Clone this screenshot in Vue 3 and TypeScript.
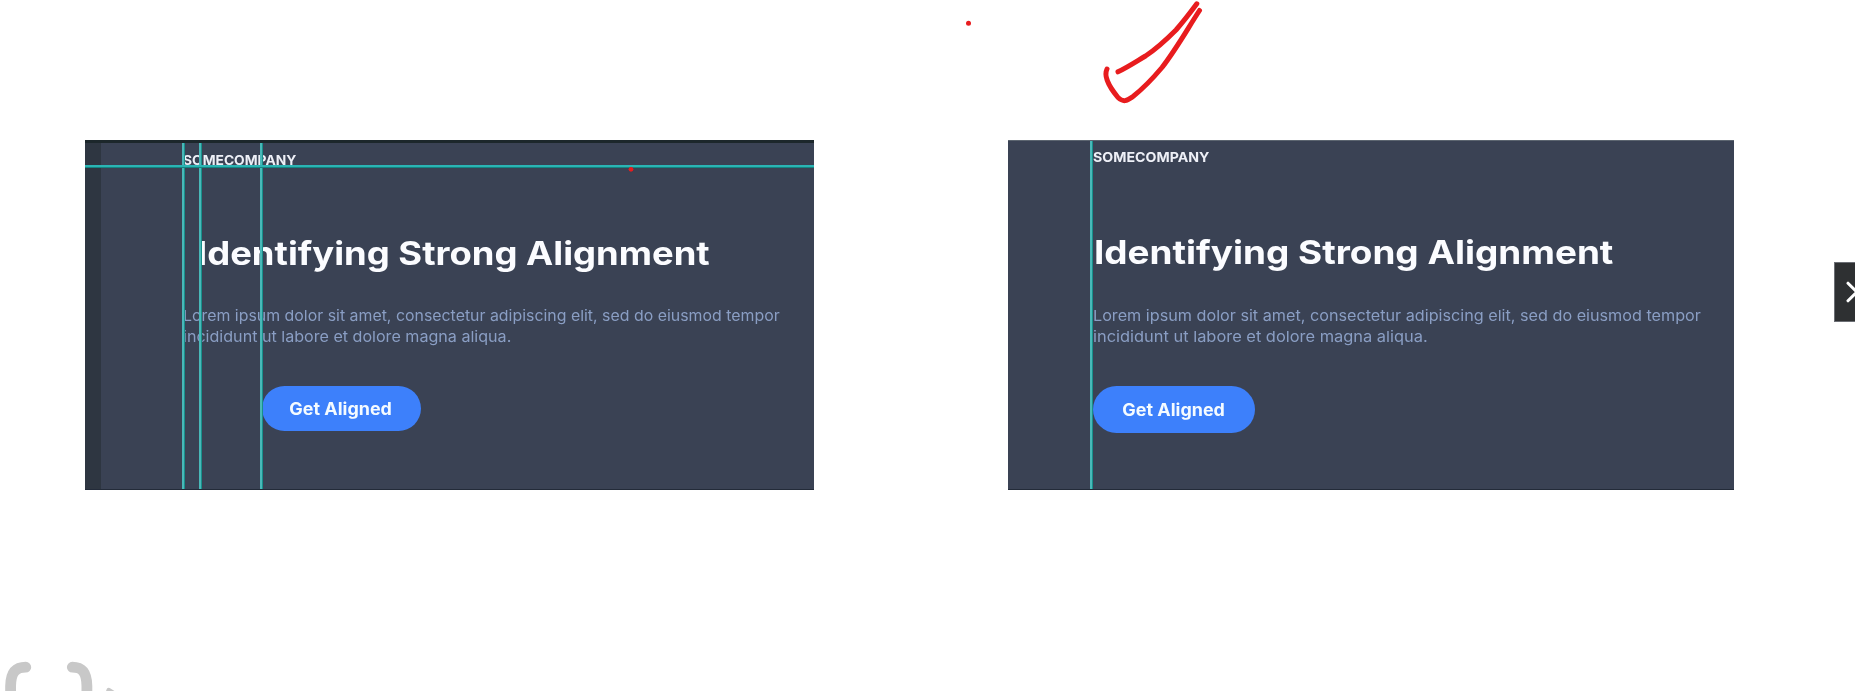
<script setup lang="ts">
interface Sample {
  id: string
  guides: string[]
  rule: boolean
}

const samples: Sample[] = [
  { id: 'loose', guides: ['g-brand', 'g-title', 'g-button'], rule: true },
  { id: 'strict', guides: ['g-shared'], rule: false },
]
</script>

<template>
  <main class="slide">
    <section v-for="s in samples" :key="s.id" class="card" :class="s.id">
      <div class="content">
        <div class="brand"><span>SOMECOMPANY</span></div>
        <h1 class="title"><span>Identifying Strong Alignment</span></h1>
        <p class="copy">
          <span class="l1">Lorem ipsum dolor sit amet, consectetur adipiscing elit, sed do eiusmod tempor</span>
          <span class="l2">incididunt ut labore et dolore magna aliqua.</span>
        </p>
        <button class="cta"><span>Get Aligned</span></button>
      </div>
      <i v-for="g in s.guides" :key="g" class="guide" :class="g"></i>
      <i v-if="s.rule" class="rule"></i>
    </section>

    <svg class="ink" width="1855" height="691" viewBox="0 0 1855 691" fill="none">
      <g stroke="#e81c1e" stroke-width="5" stroke-linecap="round" stroke-linejoin="round">
        <path d="M1118 71.800C1128 67 1137 61 1145.500 56C1157 48.500 1168 38 1176 30C1183 22 1190 13 1196.800 3.800" />
        <path d="M1107 69C1103 77 1111 89 1118 97.500C1124 103 1127 100.500 1133 96.500C1145 87 1154 77 1162 67.500C1177 48 1188 28 1199.500 10.500" />
      </g>
      <circle cx="968.500" cy="23.300" r="2.500" fill="#e81c1e" />
      <circle cx="631" cy="169.300" r="2.400" fill="#e81c1e" />
      <g stroke="#c8c8c8" stroke-width="10.800" stroke-linecap="round">
        <path d="M25.800 667.200C15 667.200 10.800 673 10.600 686V696" />
        <path d="M72.300 667.200C83 667.200 86.700 673 86.900 686V696" />
      </g>
      <path d="M106 691L107 688.500Q108.500 687 110.500 688.500L114.500 691Z" fill="#c8c8c8" />
    </svg>

    <button class="next" aria-label="Next">
      <svg width="20" height="60" viewBox="0 0 20 60" fill="none">
        <path d="M13 21.200L21.800 30L13 38.800" stroke="#fff" stroke-width="3" stroke-linecap="round" />
      </svg>
    </button>
  </main>
</template>

<style>
html, body { margin: 0; background: #fff; overflow: hidden; }
</style>

<style scoped>
.slide {
  position: relative;
  box-sizing: border-box;
  width: 1855px;
  height: 691px;
  padding: 140px 0 0 85px;
  display: flex;
  align-items: flex-start;
  gap: 194.500px;
  overflow: hidden;
  background: #fff;
  font-family: Inter, "Open Sans", sans-serif;
}
.card {
  position: relative;
  box-sizing: border-box;
  flex: none;
  height: 350px;
  background: #3a4254;
  border-bottom: 1px solid #232b39;
  overflow: hidden;
}
.loose {
  width: 728.500px;
  border-top: 3px solid #1c272b;
  background: linear-gradient(90deg, #2e3641 16px, #3a4254 16px);
}
.strict { width: 726px; border-top: 1px solid #5c6570; }
.content { filter: blur(0.5px); color: #fbfcff; white-space: nowrap; }
.content span { display: block; width: max-content; transform-origin: 0 50%; }
.brand { font-weight: 700; font-size: 13.500px; line-height: 16px; color: #eef0f7; }
.title { margin: 0; font-weight: 700; line-height: 40px; }
.copy { margin: 0; font-size: 15px; line-height: 20.500px; color: #8a9ec4; }
.cta {
  display: flex;
  align-items: center;
  justify-content: center;
  border: 0;
  padding: 0;
  border-radius: 24px;
  background: #3d80fb;
  color: #f5fbff;
  font: 700 17px/20px Inter, sans-serif;
}
.content .cta span { transform: scaleX(1.055); transform-origin: 50% 50%; }

.loose .content { padding: 9px 0 0 97.500px; }
.loose .brand span { transform: scaleX(1.022); }
.loose .title { margin: 66px 0 0 14px; font-size: 32px; }
.loose .title span { transform: scaleX(1.138); }
.loose .copy { margin-top: 32px; }
.loose .l1 { transform: scaleX(1.059); }
.loose .l2 { transform: scaleX(1.073); }
.loose .cta { margin: 39px 0 0 79px; width: 159px; height: 45px; }

.strict .content { padding: 8px 0 0 84.500px; }
.strict .brand span { transform: scaleX(1.05); }
.strict .title { margin: 67px 0 0 1px; font-size: 33px; }
.strict .title span { transform: scaleX(1.118); }
.strict .copy { margin-top: 34px; }
.strict .l1 { transform: scaleX(1.079); }
.strict .l2 { transform: scaleX(1.094); }
.strict .cta { margin: 39px 0 0; width: 162px; height: 47px; }

.guide {
  position: absolute;
  top: 0;
  bottom: -1px;
  width: 3px;
  background: linear-gradient(90deg, #49b8b8 0 66%, #188f8b 66%);
}
.g-brand { left: 97px; }
.g-title { left: 114px; }
.g-button { left: 175px; }
.g-shared { left: 82px; top: -1px; }
.rule {
  position: absolute;
  left: 0;
  right: 0;
  top: 22px;
  height: 3px;
  background: linear-gradient(#2bb4b4 0 66%, #138581 66%);
}
.ink { position: absolute; inset: 0; pointer-events: none; }
.next {
  position: absolute;
  left: 1834px;
  top: 262px;
  box-sizing: border-box;
  width: 40px;
  height: 60px;
  padding: 0;
  border: 1px solid #6b6e74;
  background: #2e3032;
}
.next svg { position: absolute; left: 0; top: -1px; overflow: visible; }
</style>
